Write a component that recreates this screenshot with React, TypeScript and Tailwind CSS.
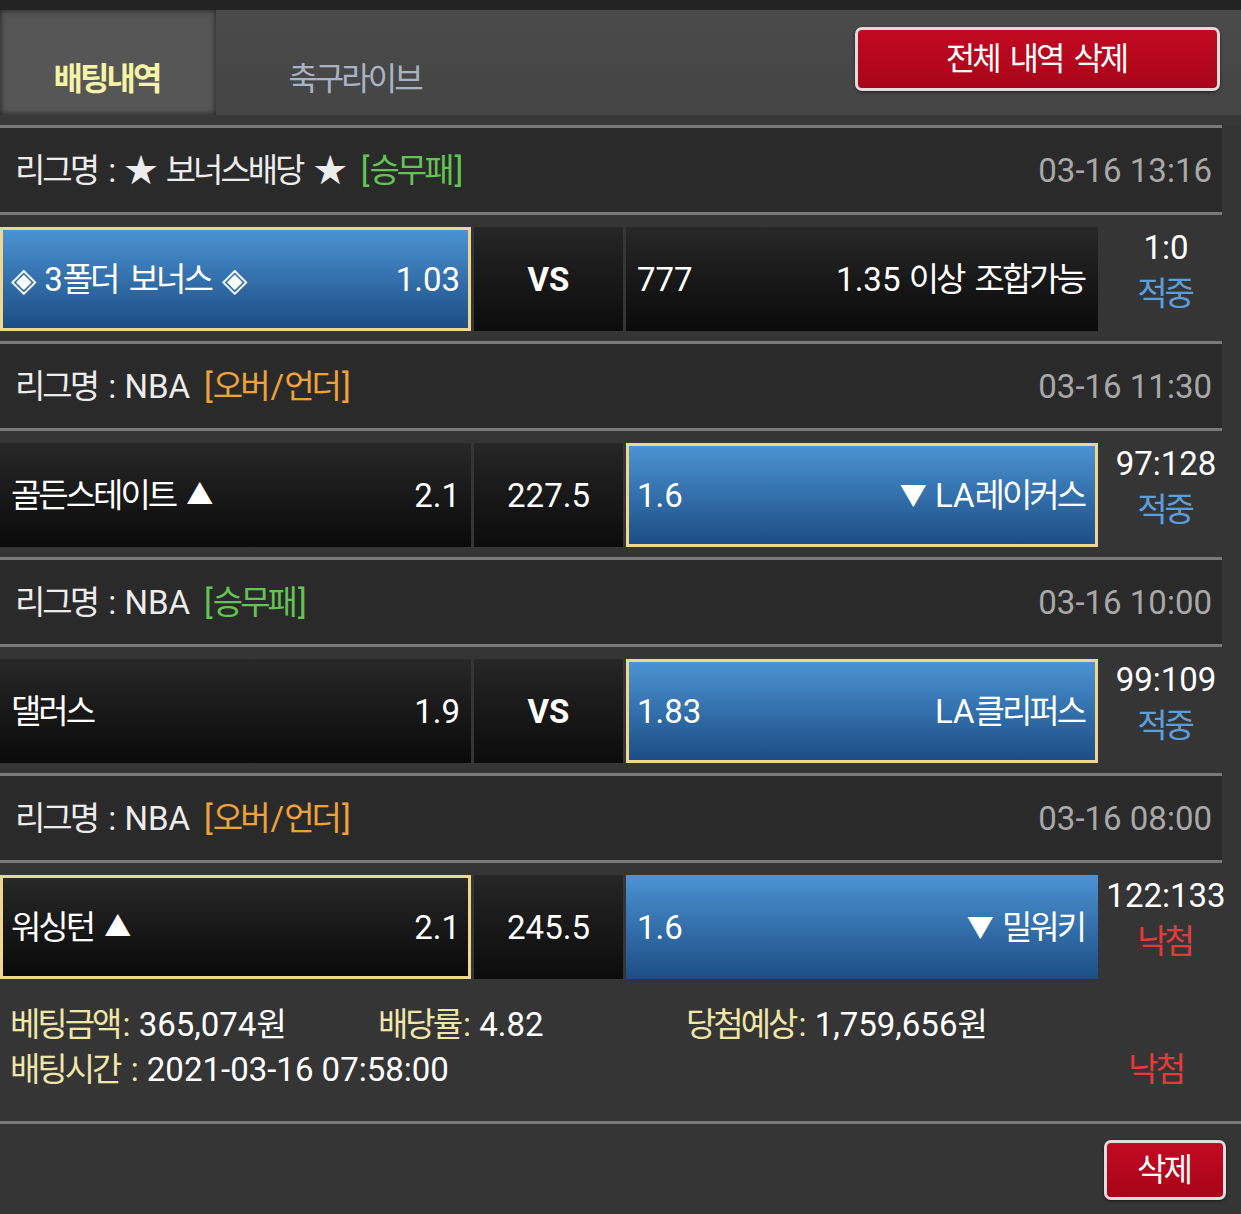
import type { ReactNode } from "react";
import clsx from "clsx";

// Korean glyphs in the screenshot are narrower than Noto CJK, so tighten them
function K({ children }: { children: ReactNode }) {
  return <span className="mr-[3px] tracking-[-3px]">{children}</span>;
}

function Tri({ up }: { up?: boolean }) {
  return <span className="inline-block align-[2px] text-[27px]">{up ? "▲" : "▼"}</span>;
}

function Sep({ full }: { full?: boolean }) {
  return <div className={clsx("h-[3px] bg-[#7a7a7a]", full ? "w-full" : "w-[1222px]")} />;
}

function League({ name, tag, tagClass, date }: { name: ReactNode; tag: ReactNode; tagClass: string; date: string }) {
  return (
    <div className="flex h-[84px] w-[1222px] items-center justify-between bg-[#2a2a2a] pl-[15px] pr-[10px]">
      <div className="text-[#ececec]">
        {name}
        <span className={clsx("ml-[14px]", tagClass)}>{tag}</span>
      </div>
      <div className="text-[#a8a8a8]">{date}</div>
    </div>
  );
}

function Side({
  left,
  right,
  blue,
  picked,
  className,
}: {
  left: ReactNode;
  right: ReactNode;
  blue?: boolean;
  picked?: boolean;
  className?: string;
}) {
  return (
    <div
      className={clsx(
        "flex h-[104px] items-center justify-between text-white",
        blue ? "bg-gradient-to-b from-[#4c93d4] to-[#1c4e85]" : "bg-gradient-to-b from-[#282828] to-[#0a0a0a]",
        picked ? "border-[3px] border-[#f1d68f] px-[8px]" : "px-[11px]",
        className
      )}
    >
      <span>{left}</span>
      <span>{right}</span>
    </div>
  );
}

type Match = {
  home: ReactNode;
  homeOdds: string;
  homeBlue?: boolean;
  homePick?: boolean;
  mid: string;
  away: ReactNode;
  awayOdds: string;
  awayBlue?: boolean;
  awayPick?: boolean;
  score: string;
  win: boolean;
};

function MatchRow({ m }: { m: Match }) {
  return (
    <div className="flex gap-[3px] pt-[12px] pb-[10px]">
      <Side left={m.home} right={m.homeOdds} blue={m.homeBlue} picked={m.homePick} className="w-[471px]" />
      <div className="flex h-[104px] w-[149px] items-center justify-center bg-gradient-to-b from-[#262626] to-[#0c0c0c] text-white">
        {m.mid === "VS" ? <span className="font-bold">VS</span> : m.mid}
      </div>
      <Side left={m.awayOdds} right={m.away} blue={m.awayBlue} picked={m.awayPick} className="w-[472px]" />
      <div className="flex h-[104px] w-[130px] flex-col items-center -mt-[2px] leading-[46px]">
        <span className="text-white">{m.score}</span>
        <span className={m.win ? "text-[#5a9edb]" : "text-[#e53a3a]"}>
          <K>{m.win ? "적중" : "낙첨"}</K>
        </span>
      </div>
    </div>
  );
}

const blocks: { name: ReactNode; tag: ReactNode; tagClass: string; date: string; match: Match }[] = [
  {
    name: (
      <>
        <K>리그명</K> : ★ <K>보너스배당</K> ★
      </>
    ),
    tag: (
      <>
        [<K>승무패</K>]
      </>
    ),
    tagClass: "text-[#62c452]",
    date: "03-16 13:16",
    match: {
      home: (
        <>
          ◈ 3<K>폴더</K> <K>보너스</K> ◈
        </>
      ),
      homeOdds: "1.03",
      homeBlue: true,
      homePick: true,
      mid: "VS",
      away: (
        <>
          1.35 <K>이상</K> <K>조합가능</K>
        </>
      ),
      awayOdds: "777",
      score: "1:0",
      win: true,
    },
  },
  {
    name: (
      <>
        <K>리그명</K> : NBA
      </>
    ),
    tag: (
      <>
        [<K>오버</K>/<K>언더</K>]
      </>
    ),
    tagClass: "text-[#eda33a]",
    date: "03-16 11:30",
    match: {
      home: (
        <>
          <K>골든스테이트</K> <Tri up />
        </>
      ),
      homeOdds: "2.1",
      mid: "227.5",
      away: (
        <>
          <Tri /> LA<K>레이커스</K>
        </>
      ),
      awayOdds: "1.6",
      awayBlue: true,
      awayPick: true,
      score: "97:128",
      win: true,
    },
  },
  {
    name: (
      <>
        <K>리그명</K> : NBA
      </>
    ),
    tag: (
      <>
        [<K>승무패</K>]
      </>
    ),
    tagClass: "text-[#62c452]",
    date: "03-16 10:00",
    match: {
      home: <K>댈러스</K>,
      homeOdds: "1.9",
      mid: "VS",
      away: (
        <>
          LA<K>클리퍼스</K>
        </>
      ),
      awayOdds: "1.83",
      awayBlue: true,
      awayPick: true,
      score: "99:109",
      win: true,
    },
  },
  {
    name: (
      <>
        <K>리그명</K> : NBA
      </>
    ),
    tag: (
      <>
        [<K>오버</K>/<K>언더</K>]
      </>
    ),
    tagClass: "text-[#eda33a]",
    date: "03-16 08:00",
    match: {
      home: (
        <>
          <K>워싱턴</K> <Tri up />
        </>
      ),
      homeOdds: "2.1",
      homePick: true,
      mid: "245.5",
      away: (
        <>
          <Tri /> <K>밀워키</K>
        </>
      ),
      awayOdds: "1.6",
      awayBlue: true,
      score: "122:133",
      win: false,
    },
  },
];

function RedButton({ children, className }: { children: ReactNode; className: string }) {
  return (
    <button
      className={clsx(
        "flex items-center justify-center rounded-[7px] border-[3px] border-[#e4dcdc] bg-gradient-to-b from-[#c20a22] to-[#a80418] text-white shadow-[0_1px_3px_rgba(0,0,0,0.6)]",
        className
      )}
    >
      {children}
    </button>
  );
}

export default function App() {
  return (
    <div className="min-h-screen bg-[#353535] font-['Roboto','Noto_Sans_CJK_KR',sans-serif] text-[33px] leading-none">
      <div className="h-[10px] bg-[#232323]" />

      {/* tabs */}
      <div className="flex h-[105px] bg-gradient-to-b from-[#4b4b4b] to-[#444444]">
        <div className="flex w-[216px] items-center justify-center bg-[#565656] pt-[33px] text-[32px] font-bold text-[#f4f3a6] shadow-[inset_0_0_6px_rgba(0,0,0,0.7)]">
          <K>배팅내역</K>
        </div>
        <div className="flex w-[280px] items-center justify-center pt-[33px] text-[32px] text-[#a9b3c5]">
          <K>축구라이브</K>
        </div>
        <div className="flex flex-1 items-start justify-end pt-[17px] pr-[21px]">
          <RedButton className="h-[64px] w-[365px] text-[32px]">
            <K>전체</K>&nbsp;<K>내역</K>&nbsp;<K>삭제</K>
          </RedButton>
        </div>
      </div>
      <div className="h-[10px] bg-[#383838]" />
      <Sep />

      {blocks.map((b, i) => (
        <div key={i}>
          <League name={b.name} tag={b.tag} tagClass={b.tagClass} date={b.date} />
          <Sep />
          <MatchRow m={b.match} />
          {i < blocks.length - 1 && <Sep />}
        </div>
      ))}

      {/* summary */}
      <div className="h-[132px] pt-[13px] pl-[10px] pr-[55px] leading-[45px] text-white">
        <div className="flex">
          <span className="w-[368px]">
            <span className="text-[#efe6a9]"><K>베팅금액</K>:</span> 365,074<K>원</K>
          </span>
          <span className="w-[308px]">
            <span className="text-[#efe6a9]"><K>배당률</K>:</span> 4.82
          </span>
          <span>
            <span className="text-[#efe6a9]"><K>당첨예상</K>:</span> 1,759,656<K>원</K>
          </span>
        </div>
        <div className="flex justify-between">
          <span>
            <span className="text-[#efe6a9]"><K>배팅시간</K> :</span> 2021-03-16 07:58:00
          </span>
          <span className="text-[#e53a3a]">
            <K>낙첨</K>
          </span>
        </div>
      </div>
      <Sep full />

      <div className="flex h-[90px] justify-end pt-[16px] pr-[15px]">
        <RedButton className="h-[60px] w-[122px] text-[32px]">
          <K>삭제</K>
        </RedButton>
      </div>
    </div>
  );
}
